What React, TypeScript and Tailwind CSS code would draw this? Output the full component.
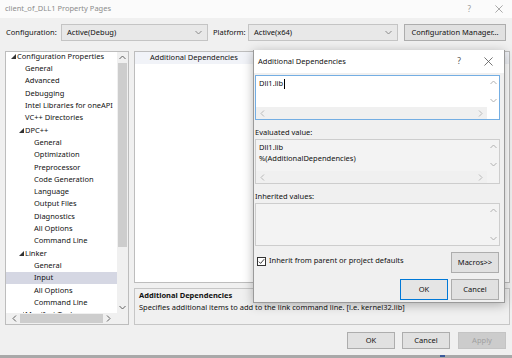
import React from 'react';

type Dir = 'up' | 'down' | 'left' | 'right';

function Chevron({ dir, color = '#9a9a9a' }: { dir: Dir; color?: string }) {
  const pts: Record<Dir, string> = {
    up: '0.5,4 3.5,1 6.5,4',
    down: '0.5,1 3.5,4 6.5,1',
    left: '4,0.5 1,3.5 4,6.5',
    right: '1,0.5 4,3.5 1,6.5',
  };
  const vertical = dir === 'up' || dir === 'down';
  return (
    <svg width={vertical ? 7 : 5} height={vertical ? 5 : 7} viewBox={vertical ? '0 0 7 5' : '0 0 5 7'}>
      <polyline points={pts[dir]} fill="none" stroke={color} strokeWidth="1" />
    </svg>
  );
}

function CloseX({ size = 9, color = '#666' }: { size?: number; color?: string }) {
  return (
    <svg width={size} height={size} viewBox="0 0 10 10">
      <path d="M0.5 0.5 L9.5 9.5 M9.5 0.5 L0.5 9.5" stroke={color} strokeWidth="0.9" />
    </svg>
  );
}

function Expander() {
  return (
    <span className="w-[6px] flex items-center">
      <svg width="5" height="5" viewBox="0 0 5 5">
        <polygon points="5,0 5,5 0,5" fill="#333" />
      </svg>
    </span>
  );
}

type Node = { label: string; level: 0 | 1 | 2; expand?: boolean; selected?: boolean };

const tree: Node[] = [
  { label: 'Configuration Properties', level: 0, expand: true },
  { label: 'General', level: 1 },
  { label: 'Advanced', level: 1 },
  { label: 'Debugging', level: 1 },
  { label: 'Intel Libraries for oneAPI', level: 1 },
  { label: 'VC++ Directories', level: 1 },
  { label: 'DPC++', level: 1, expand: true },
  { label: 'General', level: 2 },
  { label: 'Optimization', level: 2 },
  { label: 'Preprocessor', level: 2 },
  { label: 'Code Generation', level: 2 },
  { label: 'Language', level: 2 },
  { label: 'Output Files', level: 2 },
  { label: 'Diagnostics', level: 2 },
  { label: 'All Options', level: 2 },
  { label: 'Command Line', level: 2 },
  { label: 'Linker', level: 1, expand: true },
  { label: 'General', level: 2 },
  { label: 'Input', level: 2, selected: true },
  { label: 'All Options', level: 2 },
  { label: 'Command Line', level: 2 },
  { label: 'Manifest Tool', level: 1, expand: true },
];

function TreeRow({ node }: { node: Node }) {
  let pad = 'pl-[28px]';
  if (node.level === 0) pad = 'pl-[5px]';
  else if (node.level === 1) pad = node.expand ? 'pl-[13px]' : 'pl-[19px]';
  return (
    <div
      className={`h-[12.3px] shrink-0 flex items-center whitespace-nowrap text-[#111] ${pad} ${
        node.selected ? 'bg-[#d5d7e3]' : ''
      }`}
    >
      {node.expand && <Expander />}
      <span>{node.label}</span>
    </div>
  );
}

function Button({ children, className = '' }: { children: React.ReactNode; className?: string }) {
  return (
    <div
      className={`flex items-center justify-center border border-[#adadad] bg-[#e1e1e1] text-[#111] ${className}`}
    >
      {children}
    </div>
  );
}

function Dropdown({ value, className = '' }: { value: string; className?: string }) {
  return (
    <div
      className={`h-[17px] flex items-center justify-between border border-[#c4c4c4] bg-[#e8e8e8] pl-[5px] pr-[5px] text-[#111] ${className}`}
    >
      <span>{value}</span>
      <Chevron dir="down" color="#8a8a8a" />
    </div>
  );
}

function ScrollBox({
  lines,
  editable,
  hScroll,
  className = '',
}: {
  lines: string[];
  editable?: boolean;
  hScroll?: boolean;
  className?: string;
}) {
  return (
    <div
      className={`flex flex-col border ${
        editable ? 'border-[#74aee3] bg-white' : 'border-[#cdcdcd] bg-[#f3f3f3]'
      } ${className}`}
    >
      <div className="flex-1 flex min-h-0">
        <div className="flex-1 pl-[3px] pt-[2px] text-[#111] leading-[11px]">
          {lines.map((l, i) => (
            <div key={i} className="flex items-center">
              {l}
              {editable && i === 0 && <span className="w-px h-[10px] bg-black ml-px" />}
            </div>
          ))}
        </div>
        <div className="w-[12px] flex flex-col items-center justify-between py-[4px]">
          <Chevron dir="up" color="#b0b0b0" />
          <Chevron dir="down" color="#b0b0b0" />
        </div>
      </div>
      {hScroll && (
        <div className="h-[12px] flex">
          <div className="flex-1 flex items-center justify-between px-[4px] bg-[#f0f0f0]">
            <Chevron dir="left" color="#b8b8b8" />
            <Chevron dir="right" color="#b8b8b8" />
          </div>
          <div className="w-[12px]" />
        </div>
      )}
    </div>
  );
}

export default function App() {
  return (
    <div className="relative w-[512px] h-[358px] overflow-hidden bg-[#f0f0f0] font-['Noto_Sans',sans-serif] text-[7.5px] leading-none flex flex-col">
      {/* title bar */}
      <div className="h-[18px] shrink-0 bg-[#fbfbfb] flex items-center justify-between pl-[5px] pr-[9px]">
        <span className="text-[#8c8c8c]">client_of_DLL1 Property Pages</span>
        <div className="flex items-center gap-[24px]">
          <span className="text-[#9a9a9a] text-[8px]">?</span>
          <CloseX size={8} color="#8a8a8a" />
        </div>
      </div>

      {/* configuration row */}
      <div className="mt-[6px] h-[17px] flex items-center pl-[6px]">
        <span className="w-[55px] text-[#111]">Configuration:</span>
        <Dropdown value="Active(Debug)" className="w-[147px]" />
        <span className="ml-[5px] w-[35px] text-[#111]">Platform:</span>
        <Dropdown value="Active(x64)" className="w-[150px]" />
        <Button className="ml-[6px] w-[102px] h-[17px]">Configuration Manager...</Button>
      </div>

      {/* main area */}
      <div className="mt-[10px] flex gap-[5px] pl-[5px]">
        {/* tree */}
        <div className="w-[124px] h-[274px] border border-[#bdbdbd] bg-white flex flex-col">
          <div className="flex h-[261px]">
            <div className="w-[111px] overflow-hidden flex flex-col pt-[0.5px] -mt-[2px]">
              {tree.map((n, i) => (
                <TreeRow key={i} node={n} />
              ))}
            </div>
            <div className="w-[11px] bg-[#f0f0f0] flex flex-col items-center">
              <div className="h-[10px] flex items-center">
                <Chevron dir="up" color="#606060" />
              </div>
              <div className="mt-[1px] w-[9px] h-[184px] bg-[#cdcdcd]" />
              <div className="flex-1 flex items-end pb-[3px]">
                <Chevron dir="down" color="#606060" />
              </div>
            </div>
          </div>
          <div className="flex h-[11px]">
            <div className="w-[111px] bg-[#f0f0f0] flex items-center pl-[6px] pr-[6px] gap-[3px]">
              <Chevron dir="left" color="#606060" />
              <div className="flex-1 h-[9px] bg-[#cdcdcd]" />
              <Chevron dir="right" color="#606060" />
            </div>
            <div className="w-[11px] bg-[#f0f0f0]" />
          </div>
        </div>

        {/* right column */}
        <div className="w-[376px] flex flex-col gap-[5px]">
          <div className="h-[232px] border border-[#bdbdbd] bg-white">
            <div className="h-[12px] bg-[#f1f3f8] flex items-center pl-[15px] text-[#111]">
              Additional Dependencies
            </div>
          </div>
          <div className="h-[37px] border border-[#c6c6c6] bg-[#f0f0f0] pl-[4px] pt-[1px] text-[#111]">
            <div className="font-bold h-[12px] flex items-center">Additional Dependencies</div>
            <div className="h-[12px] flex items-center">
              Specifies additional items to add to the link command line. [i.e. kernel32.lib]
            </div>
          </div>
        </div>
      </div>

      {/* bottom buttons */}
      <div className="mt-[7px] flex justify-end pr-[6px]">
        <Button className="w-[48px] h-[17px]">OK</Button>
        <Button className="ml-[7px] w-[48px] h-[17px]">Cancel</Button>
        <div className="ml-[8px] w-[48px] h-[17px] flex items-center justify-center border border-[#c4c4c4] bg-[#cccccc] text-[#a0a0a0]">
          Apply
        </div>
      </div>

      {/* taskbar edge */}
      <div className="mt-auto h-[3px] bg-[#a9a9a9] flex">
        <div className="ml-[440px] w-[5px] h-[2px] bg-[#3b5a9a]" />
      </div>

      {/* modal dialog */}
      <div className="absolute left-[253px] top-[50px] w-[252px] h-[253px] border border-[#9a9a9a] bg-[#f0f0f0] shadow-[0_2px_10px_rgba(0,0,0,0.28)] flex flex-col">
        <div className="h-[23px] shrink-0 bg-white flex items-center justify-between pl-[4px] pr-[11px] -mt-[1px]">
          <span className="text-[#111]">Additional Dependencies</span>
          <div className="flex items-center gap-[23px]">
            <span className="text-[#555] text-[8.5px]">?</span>
            <CloseX size={9} color="#555" />
          </div>
        </div>
        <div className="flex-1 flex flex-col pl-[1px] pr-[4px] pt-[2px] text-[#111]">
          <ScrollBox lines={['Dll1.lib']} editable hScroll className="h-[45px]" />
          <div className="mt-[7px] h-[12px] flex items-center">Evaluated value:</div>
          <ScrollBox lines={['Dll1.lib', '%(AdditionalDependencies)']} hScroll className="h-[45px]" />
          <div className="mt-[6px] h-[13px] flex items-center">Inherited values:</div>
          <ScrollBox lines={[]} className="h-[43px]" />
          <div className="mt-[6px] h-[21px] flex items-center justify-between pr-[1px]">
            <div className="flex items-center gap-[3px] pl-[2px] -mt-[3px]">
              <div className="w-[9px] h-[9px] border border-[#333] bg-white flex items-center justify-center">
                <svg width="7" height="7" viewBox="0 0 7 7">
                  <polyline points="0.8,3.6 2.6,5.4 6.2,1.2" fill="none" stroke="#222" strokeWidth="0.9" />
                </svg>
              </div>
              <span>Inherit from parent or project defaults</span>
            </div>
            <Button className="w-[48px] h-[21px]">Macros&gt;&gt;</Button>
          </div>
          <div className="mt-[6px] flex justify-end pr-[1px]">
            <Button className="w-[48px] h-[21px] !border-[#0078d7] !bg-[#e5e5e5]">OK</Button>
            <Button className="ml-[3px] w-[48px] h-[21px]">Cancel</Button>
          </div>
        </div>
      </div>
    </div>
  );
}
